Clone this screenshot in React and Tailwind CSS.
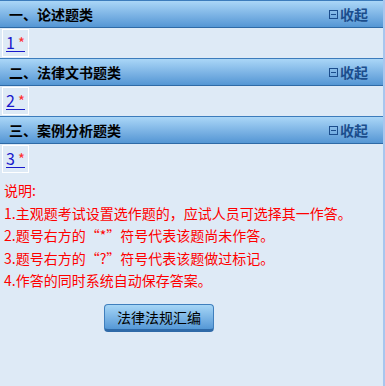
import React from 'react';

const font = { fontFamily: '"Noto Sans CJK SC", "Noto Sans", sans-serif' };

const sections = [
  { title: '一、论述题类', no: '1' },
  { title: '二、法律文书题类', no: '2' },
  { title: '三、案例分析题类', no: '3' },
];

function Header({ title }) {
  return (
    <div className="h-[28px] flex items-center justify-between pl-[9px] pr-[15px] border-t border-b border-t-[#3c7cbc] border-b-[#2e6aa6] bg-gradient-to-b from-[#aad6f7] to-[#5496d4]">
      <span className="text-[14px] font-bold text-black leading-none">{title}</span>
      <span className="flex items-center text-[14px] font-bold text-[#1b4d8c] leading-none">
        <span className="w-[9px] h-[9px] border border-[#1b4d8c] mr-[2px] flex items-center justify-center">
          <span className="w-[5px] h-px bg-[#1b4d8c]"></span>
        </span>
        收起
      </span>
    </div>
  );
}

export default function App() {
  return (
    <div className="w-[385px] h-[386px] bg-[#deeaf6] border-r-2 border-r-[#a8c6ee] overflow-hidden" style={font}>
      {sections.map((s) => (
        <div key={s.no}>
          <Header title={s.title} />
          <div className="h-[30px] px-[2px] py-px">
            <div className="relative w-[27px] h-[28px] border border-white flex items-center pl-[3px]">
              <span className="w-[19px] text-[16px] text-[#1a1acc] leading-none pb-px border-b border-[#1a1acc]">{s.no}</span>
              <span className="absolute left-[15px] top-[5px] text-[15px] text-[#ff3030] leading-none">*</span>
            </div>
          </div>
        </div>
      ))}
      <div className="pt-[5px] pl-[4px] text-[14px] leading-[22.5px] text-[#ff0000]">
        <div>说明:</div>
        <div>1.主观题考试设置选作题的，应试人员可选择其一作答。</div>
        <div>2.题号右方的“*”符号代表该题尚未作答。</div>
        <div>3.题号右方的“?”符号代表该题做过标记。</div>
        <div>4.作答的同时系统自动保存答案。</div>
      </div>
      <div className="pl-[104px] pt-[12px]">
        <button className="w-[110px] h-[28px] rounded-[4px] border border-[#3f7fbd] border-b-[3px] border-b-[#2f6aa8] bg-gradient-to-b from-[#a6d6f6] to-[#5598d6] text-[14px] text-black leading-none">
          法律法规汇编
        </button>
      </div>
    </div>
  );
}
